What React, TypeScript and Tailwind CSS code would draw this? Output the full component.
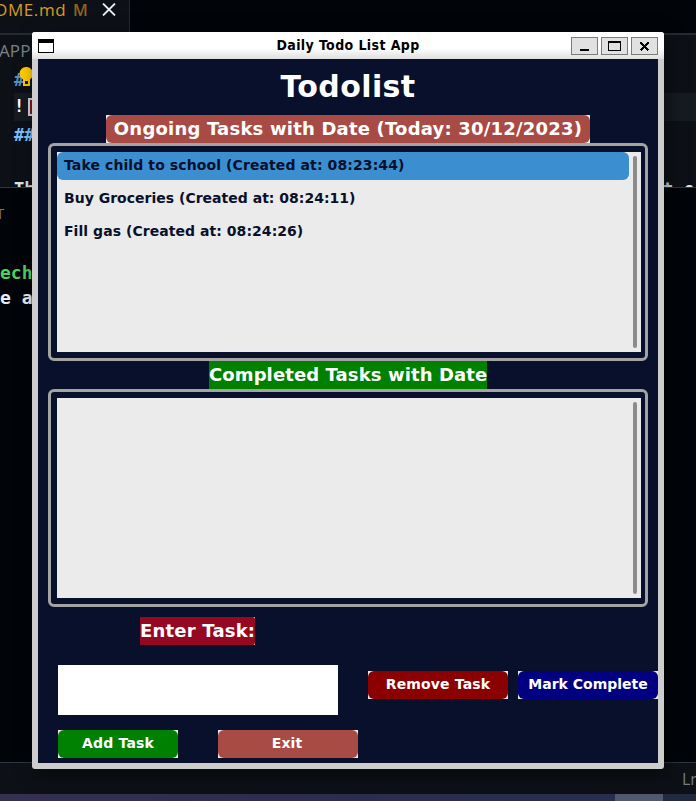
import type { ReactNode } from "react";

const tasks = [
  { text: "Take child to school (Created at: 08:23:44)", style: "rounded-md bg-[#3b8ed0] tracking-[0.1px]" },
  { text: "Buy Groceries (Created at: 08:24:11)", style: "tracking-[0.01px]" },
  { text: "Fill gas (Created at: 08:24:26)", style: "tracking-[0.05px]" },
];

function TaskButton({ label, className }: { label: string; className: string }) {
  return (
    <div className="h-7 bg-[#ebebeb]">
      <button className={`flex h-7 items-center justify-center rounded-md pb-0.5 text-[14px] text-white ${className}`}>
        {label}
      </button>
    </div>
  );
}

function ListFrame({ children }: { children?: ReactNode }) {
  return (
    <div className="ml-2.5 h-[218px] w-[600px] rounded-md border-3 border-[#a3a3a3] py-1.5 pr-1 pl-1.5">
      <div className="flex h-[200px] justify-between bg-[#ebebeb] pr-1">
        <div className="flex w-[572px] flex-col gap-[5px]">{children}</div>
        <div className="my-1 w-1 rounded-full bg-[#8c8c8c]" />
      </div>
    </div>
  );
}

function WindowControl({ children }: { children: ReactNode }) {
  return (
    <button className="h-[18px] w-[27px] border border-[#7b7b7b] bg-[#e1e1e1]">
      <svg width="25" height="16" shapeRendering="crispEdges" fill="none" stroke="black">
        {children}
      </svg>
    </button>
  );
}

function Editor() {
  return (
    <div className="flex h-[801px] w-[696px] flex-col overflow-hidden bg-[#010409]">
      <div className="flex h-[33px] shrink-0">
        <div className="flex w-[130px] border-r border-[#25292f] bg-[#0d1117] font-['Open_Sans',sans-serif] text-[17px] leading-[20px] whitespace-nowrap">
          <span className="-ml-[5px] w-[71px] tracking-[0.6px] text-[#d59b20]">DME.md</span>
          <span className="ml-[7px] w-[16px] text-[16px] font-semibold text-[#8f6222]">M</span>
          <svg className="mt-[3px] ml-[13px]" width="14" height="13" stroke="#e6edf3" strokeWidth="1.8">
            <path d="M1 0.5L13 12.5M13 0.5L1 12.5" />
          </svg>
        </div>
        <div className="flex-1" />
      </div>
      <div className="flex h-[155px] shrink-0 flex-col overflow-hidden border-t-2 border-b border-t-[#262a31] border-b-[#30363d] bg-[#0d1117] font-['DejaVu_Sans_Mono',monospace] text-[17px] font-bold text-[#79c0ff]">
        <div className="h-[32px] shrink-0 pt-[4px] font-['Open_Sans',sans-serif] leading-[24px] font-normal text-[#7b828a]">
          <span className="-ml-[1px] tracking-[0.1px]">APP</span>
        </div>
        <div className="flex h-[26px] shrink-0 pl-[14px] leading-[26px] text-[#558fc4]">
          <span className="w-[5px]">#</span>
          <svg width="14" height="20" viewBox="0 0 14 20">
            <path fill="#ffcc00" d="M7 0a6.5 6.5 0 0 0-6.5 6.5c0 3 1.7 4.5 3.5 6V19h7v-6.5c1.8-1.5 3-3 3-6A6.5 6.5 0 0 0 7 0Z" />
            <path fill="#0d1117" d="M6 14h3v3H6z" />
          </svg>
        </div>
        <div className="ml-[14px] flex h-[28px] shrink-0 items-center bg-[#161b22] text-white">
          <span className="w-[14px]">!</span>
          <span className="h-[18px] w-[10px] border-2 border-r-0 border-[#c7d8e9] bg-[#87161b]" />
        </div>
        <div className="h-[54px] shrink-0 pl-[14px] leading-[28px]">##</div>
        <div className="flex h-[28px] shrink-0 justify-between pl-[14px] leading-[28px] text-[#dce3e9]">
          <span>Th</span>
          <span className="w-[33px] whitespace-pre">t c</span>
        </div>
      </div>
      <div className="h-[574px] shrink-0 font-['DejaVu_Sans_Mono',monospace] text-[18px] leading-[26px] font-bold text-[#e6edf3]">
        <div className="h-[72px] pt-[12px] font-['Open_Sans',sans-serif] text-[15px] font-normal text-[#84745c]">
          <span className="-ml-[4px]">T</span>
        </div>
        <div className="h-[25px] text-[#4fd160]">ech</div>
        <div>e a</div>
      </div>
      <div className="flex h-[32px] shrink-0 items-center justify-end border-t border-[#30363d] bg-[#0d1117] font-['Open_Sans',sans-serif] text-[16px] text-[#747c85]">
        <span className="w-[14px]">Ln</span>
      </div>
      <div className="flex h-[7px] shrink-0 bg-linear-to-r from-[#353050] via-[#2d2d52] to-[#26304f]">
        <div className="w-[615px]" />
        <div className="w-[48px] bg-[#505970]" />
        <div className="flex-1 bg-[#202b40]" />
      </div>
    </div>
  );
}

function TodoWindow() {
  return (
    <div className="absolute top-8 left-8 h-[737px] w-[632px] overflow-hidden rounded-[3px] bg-[#cdcdcd] font-['DejaVu_Sans',sans-serif] font-bold text-white">
      <div className="flex h-[27px] items-center justify-between bg-linear-to-b from-white from-60% to-[#dedede] px-1.5">
        <div className="h-[14px] w-4 border border-t-4 border-black bg-white" />
        <h2 className="ml-[71px] font-['DejaVu_Sans_Condensed','DejaVu_Sans',sans-serif] text-[14px] [font-stretch:condensed] tracking-[0.4px] text-black">
          Daily Todo List App
        </h2>
        <div className="flex gap-[3px] pt-px">
          <WindowControl>
            <path d="M8 12h9" strokeWidth="2" />
          </WindowControl>
          <WindowControl>
            <path d="M6 4h13" strokeWidth="2" />
            <path d="M6.5 4v8.5h12v-8.5" />
          </WindowControl>
          <WindowControl>
            <path d="M8.5 4.5l8 8M16.5 4.5l-8 8" strokeWidth="2" />
          </WindowControl>
        </div>
      </div>
      <main className="mx-1.5 h-[704px] bg-[#09102b]">
        <h1 className="h-14 text-center text-[30px] leading-[56px] tracking-[0.4px]">Todolist</h1>
        <div className="ml-[68px] h-7 w-[484px] bg-[#ebebeb]">
          <h3 className="h-7 rounded-md bg-[#a94b45] text-center text-[18px] leading-[27px] tracking-[0.2px] whitespace-nowrap">
            Ongoing Tasks with Date (Today: 30/12/2023)
          </h3>
        </div>
        <ListFrame>
          {tasks.map((task) => (
            <div key={task.text} className={`h-7 pl-[7px] text-[14px] leading-[26px] text-[#09102b] ${task.style}`}>
              {task.text}
            </div>
          ))}
        </ListFrame>
        <h3 className="ml-[171px] h-7 w-[278px] bg-[#008000] text-center text-[18px] leading-[27px] tracking-[0.1px] whitespace-nowrap">
          Completed Tasks with Date
        </h3>
        <ListFrame />
        <div className="mt-2.5 ml-[102px] h-7 w-[115px] bg-[#ebebeb]">
          <h3 className="h-7 rounded-r-[2px] bg-[#960821] text-[18px] leading-[27px] tracking-[0.2px] whitespace-nowrap">
            Enter Task:
          </h3>
        </div>
        <div className="mt-5 flex items-start">
          <input className="ml-5 h-[50px] w-[280px] bg-white" aria-label="Enter Task" />
          <div className="mt-1.5 ml-[30px] flex gap-2.5">
            <TaskButton label="Remove Task" className="w-[140px] bg-[#8b0000] tracking-[0.15px]" />
            <TaskButton label="Mark Complete" className="w-[140px] bg-[#000080]" />
          </div>
        </div>
        <div className="mt-[15px] ml-5 flex gap-10">
          <TaskButton label="Add Task" className="w-[120px] bg-[#008000] tracking-[0.2px]" />
          <TaskButton label="Exit" className="w-[140px] bg-[#a94b45] pr-0.5 tracking-[0.1px]" />
        </div>
      </main>
    </div>
  );
}

export default function App() {
  return (
    <div className="relative h-[801px] w-[696px] overflow-hidden">
      <Editor />
      <div className="absolute top-8 left-8 h-[737px] w-[632px] shadow-[4px_6px_16px_0_rgba(0,0,0,0.5)]" />
      <TodoWindow />
    </div>
  );
}
